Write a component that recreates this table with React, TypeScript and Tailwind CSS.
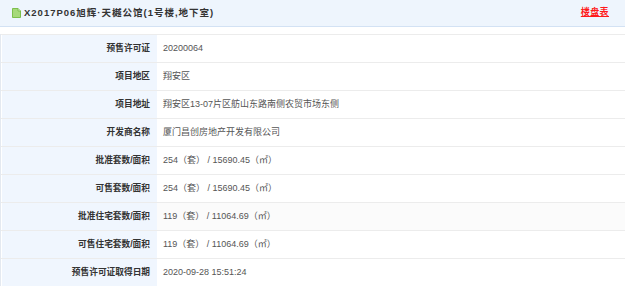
import React from 'react';

const rows: [string, string][] = [
    ['预售许可证', '20200064'],
    ['项目地区', '翔安区'],
    ['项目地址', '翔安区13-07片区舫山东路南侧农贸市场东侧'],
    ['开发商名称', '厦门昌创房地产开发有限公司'],
    ['批准套数/面积', '254（套） / 15690.45（㎡）'],
    ['可售套数/面积', '254（套） / 15690.45（㎡）'],
    ['批准住宅套数/面积', '119（套） / 11064.69（㎡）'],
    ['可售住宅套数/面积', '119（套） / 11064.69（㎡）'],
    ['预售许可证取得日期', '2020-09-28 15:51:24'],
];

const DocIcon = () => (
    <svg width="9" height="10" viewBox="0 0 9 10" className="shrink-0">
        <path d="M0.5 0.5h5.5l2.5 2.5v6.5h-8z" fill="#a6d97a" stroke="#7cbf4c" />
        <path d="M6 0.5v2.5h2.5" fill="#dff1cc" stroke="#7cbf4c" />
    </svg>
);

const App: React.FC = () => {
    return (
        <div className="w-[625px] h-[288px] bg-white overflow-hidden text-[9px] font-['Liberation_Sans','Noto_Sans_CJK_SC',sans-serif]">
            <div className="h-[27px] bg-[#eef5fd] border-b border-[#d3e2f4] flex items-center justify-between pl-[12px] pr-[16px]">
                <div className="flex items-center gap-[3px]">
                    <DocIcon />
                    <span className="font-bold text-[#333] tracking-[1px] text-[9.5px]">X2017P06旭辉·天樾公馆(1号楼,地下室)</span>
                </div>
                <a className="font-bold text-[#ff1a1a] underline text-[9px] tracking-[0.4px]">楼盘表</a>
            </div>

            <div className="mt-[7px] border-l border-[#e4e9f0]">
                {rows.map(([label, value], i) => (
                    <div key={label} className="flex h-[28px] border-t border-[#ececec]">
                        <div className="w-[155px] ml-[1px] bg-[#f0f6fe] flex items-center justify-end pr-[7px] font-bold text-[#333] text-[8.7px]">
                            {label}
                        </div>
                        <div className={`flex-1 flex items-center pl-[6px] text-[#555] ${i === 6 ? 'bg-[#fbfbfb]' : 'bg-white'}`}>
                            {value}
                        </div>
                    </div>
                ))}
            </div>
        </div>
    );
};

export default App;
